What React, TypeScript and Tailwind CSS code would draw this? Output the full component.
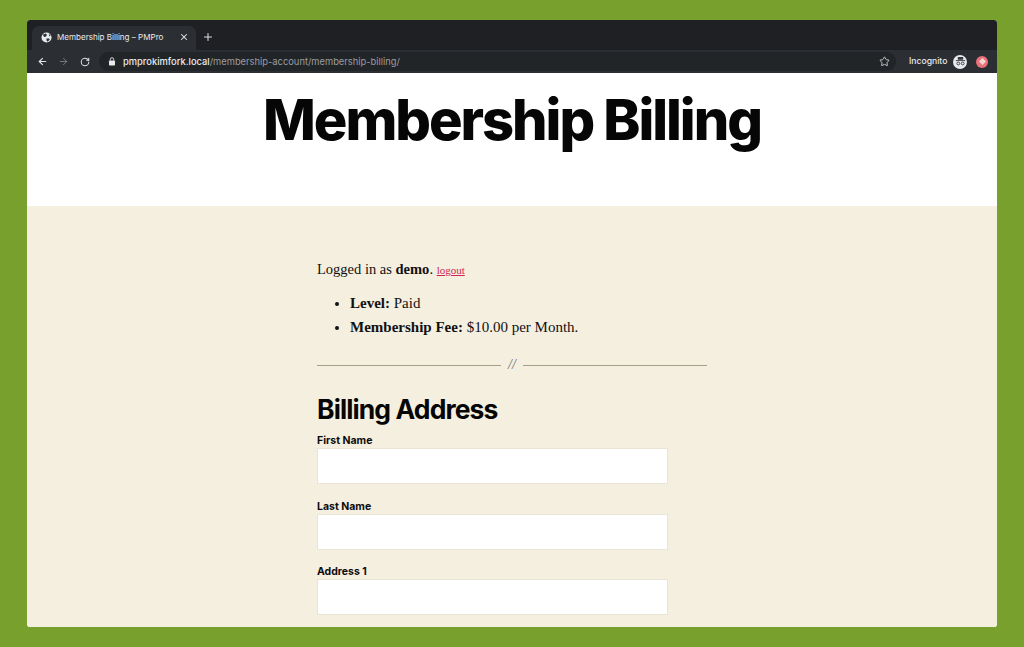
import { ArrowLeft, ArrowRight, RotateCw, Star, X, Plus } from "lucide-react";

function Field({ label, top }: { label: string; top: string }) {
  return (
    <div className={top}>
      <div className="text-[10.5px] leading-[14px] font-bold text-[#0b0b0b] font-['Inter',sans-serif] h-[14px]">{label}</div>
      <div className="w-[351px] h-[36px] bg-white border border-[#e9e4d3]" />
    </div>
  );
}

export default function App() {
  return (
    <div className="w-[1024px] h-[647px] bg-[#78a02c] pt-[20px] pl-[27px] overflow-hidden">
      <div className="w-[970px] h-[607px] rounded-[3px] overflow-hidden flex flex-col bg-white">
        <div className="h-[30px] bg-[#1e2024] flex items-end pl-[5px] shrink-0">
          <div className="w-[164px] h-[24px] bg-[#2b2e32] rounded-t-[7px] flex items-center pl-[9px] pb-[2px] text-[#e8eaed] font-['Inter',sans-serif]">
            <svg width="11" height="11" viewBox="0 0 12 12" className="shrink-0">
              <circle cx="6" cy="6" r="5.5" fill="#e8eaed" />
              <path d="M2 3 L5 1.5 L6.5 3 L5.5 5 L3.5 5.5 Z M6 7 L9 7 L9.5 8.5 L7 10.5 L6 9 Z M8.5 2 L10.5 4 L9 4.5 Z" fill="#2b2e32" />
            </svg>
            <span className="ml-[5px] text-[8.05px] w-[122px] leading-none">Membership Billing – PMPro</span>
            <X size={10} strokeWidth={2.5} />
          </div>
          <Plus size={12} strokeWidth={2} className="text-[#dfe1e4] ml-[6px] mb-[7px]" />
        </div>
        <div className="h-[23px] bg-[#2b2e32] flex items-center shrink-0 text-[#dfe1e4]">
          <ArrowLeft size={11} strokeWidth={2.5} className="ml-[10px]" />
          <ArrowRight size={11} strokeWidth={2} className="ml-[10px] text-[#7d8084]" />
          <RotateCw size={10} strokeWidth={2.5} className="ml-[11px]" />
          <div className="ml-[9px] w-[797px] h-[19px] rounded-full bg-[#222528] flex items-center pl-[9px] font-['Inter',sans-serif]">
            <svg width="8" height="9" viewBox="0 0 8 9" className="shrink-0" fill="none">
              <rect x="1" y="3.5" width="6" height="5" rx="0.8" fill="#e8eaed" />
              <path d="M2.3 3.5 V2.4 a1.7 1.7 0 0 1 3.4 0 V3.5" stroke="#e8eaed" strokeWidth="0.9" />
            </svg>
            <span className="ml-[7px] text-[9.35px] leading-none font-medium text-[#e8eaed]">pmprokimfork.local</span>
            <span className="text-[9.35px] leading-none text-[#9a9da1]">/membership-account/membership-billing/</span>
            <Star size={11} strokeWidth={1.8} className="ml-auto mr-[6px]" />
          </div>
          <span className="ml-[13px] text-[8.6px] font-medium leading-none text-[#e8eaed] font-['Inter',sans-serif]">Incognito</span>
          <div className="ml-[6px] w-[14px] h-[14px] rounded-full bg-[#e8eaed] flex items-center justify-center">
            <svg width="11" height="11" viewBox="0 0 10 10" fill="#33363a">
              <rect x="2.5" y="1" width="5" height="2.3" rx="0.6" />
              <rect x="0.8" y="3.8" width="8.4" height="0.8" />
              <circle cx="3" cy="6.8" r="1.3" fill="none" stroke="#33363a" strokeWidth="0.8" />
              <circle cx="7" cy="6.8" r="1.3" fill="none" stroke="#33363a" strokeWidth="0.8" />
            </svg>
          </div>
          <div className="ml-[9px] w-[12px] h-[12px] rounded-full bg-[#e8717a] flex items-center justify-center">
            <div className="w-[5px] h-[5px] rotate-45 bg-[#f9d5d0]" />
          </div>
        </div>
        <div className="h-[133px] bg-white flex justify-center shrink-0">
          <h1 className="mt-[13px] text-[56px] leading-[68px] font-extrabold tracking-[-2.05px] text-[#060606] font-['Inter',sans-serif]">Membership Billing</h1>
        </div>
        <div className="flex-1 bg-[#f5efe0] pl-[290px] pt-[54px] overflow-hidden">
          <div className="text-[14.5px] leading-[18px] text-[#111] font-['Liberation_Serif',serif]">
            Logged in as <b>demo</b>. <a className="text-[11px] text-[#cd2653] underline">logout</a>
          </div>
          <ul className="list-disc pl-[33px] mt-[12px] text-[15px] leading-[24px] text-[#111] font-['Liberation_Serif',serif]">
            <li><b>Level:</b> Paid</li>
            <li><b>Membership Fee:</b> $10.00 per Month.</li>
          </ul>
          <div className="w-[390px] flex items-center mt-[19px] h-[14px]">
            <div className="w-[184px] h-[1px] bg-[#a89e8c]" />
            <span className="w-[22px] text-center text-[14px] leading-none italic text-[#6d6d6d] font-['Liberation_Serif',serif]">//</span>
            <div className="flex-1 h-[1px] bg-[#a89e8c]" />
          </div>
          <h2 className="mt-[20px] text-[26.5px] leading-[34px] font-bold tracking-[-0.9px] text-[#060606] font-['Inter',sans-serif]">Billing Address</h2>
          <Field label="First Name" top="mt-[8px]" />
          <Field label="Last Name" top="mt-[16px]" />
          <Field label="Address 1" top="mt-[15px]" />
        </div>
      </div>
    </div>
  );
}
